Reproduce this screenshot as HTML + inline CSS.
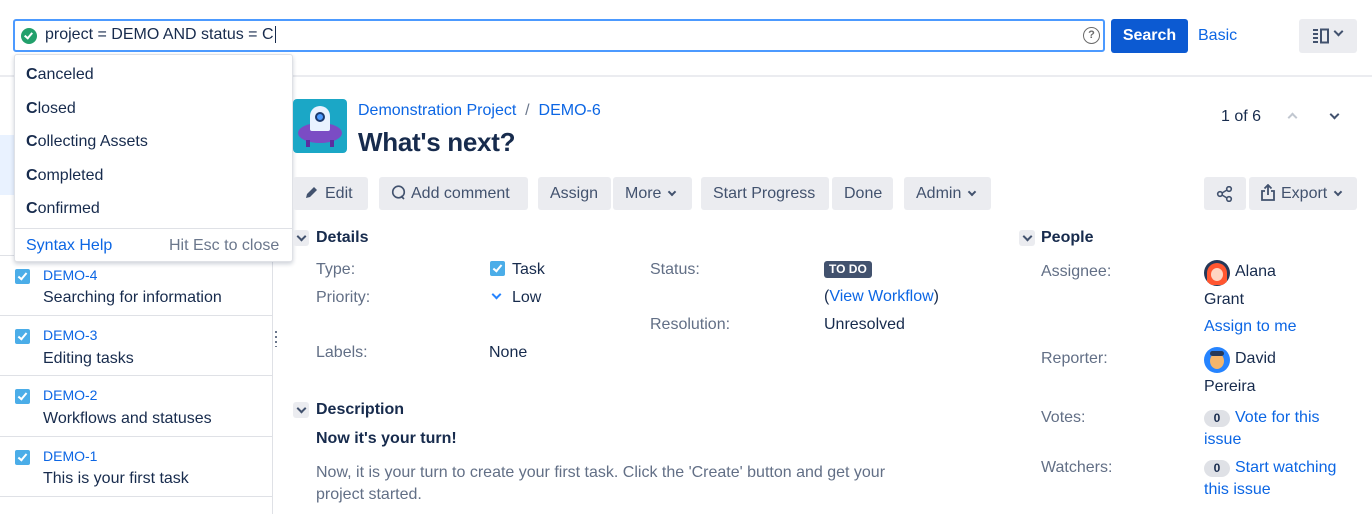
<!DOCTYPE html>
<html><head><meta charset="utf-8"><style>
*{margin:0;padding:0;box-sizing:border-box}
body{width:1372px;height:514px;overflow:hidden;background:#fff;font-family:"Liberation Sans",sans-serif;font-size:16px;color:#172b4d;position:relative}
.a{position:absolute;white-space:nowrap}
.lnk{color:#0c66e4}
.lbl{color:#626f86}
.btn{position:absolute;top:177px;height:33px;background:#ebecf0;border-radius:3px;color:#42526e;font-size:16px;line-height:33px;padding:0 12px}
.chev{display:inline-block;width:6px;height:6px;border-right:2px solid #42526e;border-bottom:2px solid #42526e;transform:rotate(45deg);margin-left:8px;position:relative;top:-3px}
.cb{position:absolute;width:15px;height:15px;background:#4bade8;border-radius:2px}
.cb:after{content:"";position:absolute;left:5px;top:2px;width:3px;height:7px;border-right:2px solid #fff;border-bottom:2px solid #fff;transform:rotate(40deg)}
.row{position:absolute;left:0;width:272px;height:60px;border-bottom:1px solid #dfe1e6}
.sec{position:absolute;width:16px;height:16px;background:#ebecf0;border-radius:3px}
.sec:after{content:"";position:absolute;left:5px;top:3px;width:5px;height:5px;border-right:2px solid #42526e;border-bottom:2px solid #42526e;transform:rotate(45deg)}
</style></head><body>
<!-- top bar -->
<div class="a" style="left:13px;top:19px;width:1092px;height:33px;border:2px solid #4c9aff;border-radius:3px"></div>
<div class="a" style="left:21px;top:28px;width:16px;height:16px;border-radius:50%;background:#22a06b"></div>
<div class="a" style="left:26px;top:31px;width:5px;height:8px;border-right:2px solid #fff;border-bottom:2px solid #fff;transform:rotate(40deg)"></div>
<div class="a" style="left:45px;top:26px;font-size:16px">project = DEMO AND status = C<span style="border-left:1px solid #172b4d;margin-left:1px"></span></div>
<div class="a" style="left:1083px;top:27px;width:17px;height:17px;border:1.5px solid #6b6b6b;border-radius:50%;font-size:11px;line-height:14px;text-align:center;color:#6b6b6b;font-weight:bold">?</div>
<div class="a" style="left:1111px;top:19px;width:77px;height:34px;background:#0c5ad2;border-radius:3px;color:#fff;font-weight:bold;font-size:16px;text-align:center;line-height:34px">Search</div>
<div class="a lnk" style="left:1198px;top:27px;font-size:16px">Basic</div>
<div class="a" style="left:1299px;top:19px;width:58px;height:34px;background:#ebecf0;border-radius:3px"></div>
<svg class="a" style="left:1312px;top:28px" width="18" height="16" viewBox="0 0 18 16"><path d="M1 2h5M1 6h5M1 10h5M1 14h5" stroke="#42526e" stroke-width="2"/><rect x="9" y="1.5" width="7" height="13" fill="none" stroke="#42526e" stroke-width="2"/></svg>
<div class="a" style="left:1335px;top:28px;width:7px;height:7px;border-right:2px solid #42526e;border-bottom:2px solid #42526e;transform:rotate(45deg)"></div>
<div class="a" style="left:0;top:75px;width:1372px;height:2px;background:#ebecf0"></div>

<!-- left panel -->
<div class="a" style="left:272px;top:77px;width:1px;height:437px;background:#dfe1e6"></div>
<div class="a" style="left:0;top:135px;width:272px;height:60px;background:#e9f2ff"></div>
<div class="row" style="top:196px"></div>
<div class="row" style="top:256px"></div>
<div class="cb" style="left:15px;top:269px"></div><div class="a lnk" style="left:43px;top:267px;font-size:14px">DEMO-4</div><div class="a" style="left:43px;top:289px">Searching for information</div>
<div class="row" style="top:316px"></div>
<div class="cb" style="left:15px;top:329px"></div><div class="a lnk" style="left:43px;top:327px;font-size:14px">DEMO-3</div><div class="a" style="left:43px;top:350px">Editing tasks</div>
<div class="row" style="top:377px"></div>
<div class="cb" style="left:15px;top:389px"></div><div class="a lnk" style="left:43px;top:387px;font-size:14px">DEMO-2</div><div class="a" style="left:43px;top:410px">Workflows and statuses</div>
<div class="row" style="top:437px"></div>
<div class="cb" style="left:15px;top:450px"></div><div class="a lnk" style="left:43px;top:448px;font-size:14px">DEMO-1</div><div class="a" style="left:43px;top:470px">This is your first task</div>
<div class="a" style="left:275px;top:331px;width:2px;height:16px;background:repeating-linear-gradient(#6b778c 0 2px,transparent 2px 5px)"></div>

<!-- dropdown -->
<div class="a" style="left:14px;top:54px;width:279px;height:208px;background:#fff;border:1px solid #dfe1e6;border-radius:3px;box-shadow:0 2px 4px rgba(9,30,66,.2)">
<div class="a" style="left:11px;top:11px"><b>C</b>anceled</div>
<div class="a" style="left:11px;top:45px"><b>C</b>losed</div>
<div class="a" style="left:11px;top:78px"><b>C</b>ollecting Assets</div>
<div class="a" style="left:11px;top:112px"><b>C</b>ompleted</div>
<div class="a" style="left:11px;top:145px"><b>C</b>onfirmed</div>
<div class="a" style="left:0;top:173px;width:277px;height:1px;background:#dfe1e6"></div>
<div class="a lnk" style="left:11px;top:182px">Syntax Help</div>
<div class="a" style="left:154px;top:182px;color:#6b778c">Hit Esc to close</div>
</div>

<!-- header -->
<div class="a" style="left:293px;top:99px;width:54px;height:54px;background:#1ba7c6;border-radius:4px;overflow:hidden">
<div class="a" style="left:5px;top:24px;width:44px;height:20px;background:#7b4cc4;border-radius:50%"></div>
<div class="a" style="left:17px;top:7px;width:20px;height:25px;background:#e9f2ff;border-radius:10px 10px 2px 2px"></div>
<div class="a" style="left:22px;top:13px;width:10px;height:10px;background:#4c9aff;border-radius:50%;border:2px solid #1d3a6e"></div>
<div class="a" style="left:13px;top:41px;width:4px;height:7px;background:#5c2da0"></div><div class="a" style="left:37px;top:41px;width:4px;height:7px;background:#5c2da0"></div>
</div>
<div class="a lnk" style="left:358px;top:102px">Demonstration Project <span style="color:#6b778c">&nbsp;/&nbsp;</span> DEMO-6</div>
<div class="a" style="left:358px;top:127px;font-size:26px;font-weight:bold;letter-spacing:-0.3px">What's next?</div>
<div class="a" style="left:1221px;top:108px">1 of 6</div>
<div class="a" style="left:1289px;top:114px;width:7px;height:7px;border-left:2px solid #c1c7d0;border-top:2px solid #c1c7d0;transform:rotate(45deg)"></div>
<div class="a" style="left:1331px;top:111px;width:7px;height:7px;border-right:2px solid #42526e;border-bottom:2px solid #42526e;transform:rotate(45deg)"></div>

<!-- buttons -->
<div class="btn" style="left:293px;width:75px"><svg width="14" height="14" viewBox="0 0 14 14" style="vertical-align:-1px;margin-right:6px"><path d="M1 13l1-4 7-7 3 3-7 7z" fill="#42526e"/></svg>Edit</div>
<div class="btn" style="left:379px;width:149px"><svg width="15" height="15" viewBox="0 0 15 15" style="vertical-align:-2px;margin-right:5px"><circle cx="7.5" cy="7" r="5.8" fill="none" stroke="#42526e" stroke-width="1.6"/><path d="M10 11l3 3" stroke="#42526e" stroke-width="1.6"/></svg>Add comment</div>
<div class="btn" style="left:538px;width:73px">Assign</div>
<div class="btn" style="left:613px;width:79px">More<span class="chev"></span></div>
<div class="btn" style="left:701px;width:128px">Start Progress</div>
<div class="btn" style="left:832px;width:61px">Done</div>
<div class="btn" style="left:904px;width:87px">Admin<span class="chev"></span></div>
<div class="btn" style="left:1204px;width:42px"><svg width="18" height="16" viewBox="0 0 18 16" style="position:absolute;left:12px;top:9px"><circle cx="4" cy="8" r="2.3" fill="none" stroke="#42526e" stroke-width="1.6"/><circle cx="13" cy="3" r="2.3" fill="none" stroke="#42526e" stroke-width="1.6"/><circle cx="13" cy="13" r="2.3" fill="none" stroke="#42526e" stroke-width="1.6"/><path d="M6 7l5-3M6 9l5 3" stroke="#42526e" stroke-width="1.6"/></svg></div>
<div class="btn" style="left:1249px;width:108px"><svg width="14" height="17" viewBox="0 0 14 17" style="vertical-align:-3px;margin-right:6px"><path d="M4 7H1v9h12V7h-3M7 11V1M3.5 4.5L7 1l3.5 3.5" fill="none" stroke="#42526e" stroke-width="1.8"/></svg>Export<span class="chev"></span></div>

<!-- details -->
<div class="sec" style="left:293px;top:230px"></div>
<div class="a" style="left:316px;top:229px;font-weight:bold;font-size:16px">Details</div>
<div class="a lbl" style="left:316px;top:261px">Type:</div>
<div class="cb" style="left:490px;top:261px"></div><div class="a" style="left:512px;top:261px">Task</div>
<div class="a lbl" style="left:316px;top:289px">Priority:</div>
<div class="a" style="left:493px;top:291px;width:7px;height:7px;border-right:2px solid #2684ff;border-bottom:2px solid #2684ff;transform:rotate(45deg)"></div>
<div class="a" style="left:512px;top:289px">Low</div>
<div class="a lbl" style="left:316px;top:344px">Labels:</div>
<div class="a" style="left:489px;top:344px">None</div>
<div class="a lbl" style="left:650px;top:261px">Status:</div>
<div class="a" style="left:824px;top:261px;background:#42526e;color:#fff;font-size:12px;font-weight:bold;padding:1px 5px;border-radius:3px;line-height:15px">TO DO</div>
<div class="a" style="left:824px;top:288px">(<span class="lnk">View Workflow</span>)</div>
<div class="a lbl" style="left:650px;top:316px">Resolution:</div>
<div class="a" style="left:824px;top:316px">Unresolved</div>

<div class="sec" style="left:293px;top:402px"></div>
<div class="a" style="left:316px;top:401px;font-weight:bold;font-size:16px">Description</div>
<div class="a" style="left:316px;top:430px;font-weight:bold">Now it's your turn!</div>
<div class="a lbl" style="left:316px;top:462px;line-height:22px">Now, it is your turn to create your first task. Click the 'Create' button and get your<br>project started.</div>

<!-- people -->
<div class="sec" style="left:1019px;top:230px"></div>
<div class="a" style="left:1041px;top:229px;font-weight:bold;font-size:16px">People</div>
<div class="a lbl" style="left:1041px;top:263px">Assignee:</div>
<div class="a" style="left:1204px;top:260px;width:26px;height:26px;border-radius:50%;background:#253858;overflow:hidden"><div class="a" style="left:3px;top:3px;width:20px;height:22px;background:#ff5630;border-radius:10px 10px 3px 3px"></div><div class="a" style="left:7px;top:8px;width:12px;height:13px;background:#ffd5c2;border-radius:50%"></div></div>
<div class="a" style="left:1235px;top:263px">Alana</div>
<div class="a" style="left:1204px;top:291px">Grant</div>
<div class="a lnk" style="left:1204px;top:318px">Assign to me</div>
<div class="a lbl" style="left:1041px;top:350px">Reporter:</div>
<div class="a" style="left:1204px;top:347px;width:26px;height:26px;border-radius:50%;background:#2684ff;overflow:hidden"><div class="a" style="left:6px;top:6px;width:14px;height:16px;background:#f4b56a;border-radius:50%"></div><div class="a" style="left:6px;top:4px;width:14px;height:5px;background:#253858;border-radius:3px"></div></div>
<div class="a" style="left:1235px;top:350px">David</div>
<div class="a" style="left:1204px;top:378px">Pereira</div>
<div class="a lbl" style="left:1041px;top:409px">Votes:</div>
<div class="a" style="left:1204px;top:410px;width:26px;height:17px;background:#dfe1e6;border-radius:9px;font-size:12px;font-weight:bold;text-align:center;line-height:17px">0</div>
<div class="a lnk" style="left:1235px;top:409px">Vote for this</div>
<div class="a lnk" style="left:1204px;top:431px">issue</div>
<div class="a lbl" style="left:1041px;top:459px">Watchers:</div>
<div class="a" style="left:1204px;top:460px;width:26px;height:17px;background:#dfe1e6;border-radius:9px;font-size:12px;font-weight:bold;text-align:center;line-height:17px">0</div>
<div class="a lnk" style="left:1235px;top:459px">Start watching</div>
<div class="a lnk" style="left:1204px;top:481px">this issue</div>
</body></html>
